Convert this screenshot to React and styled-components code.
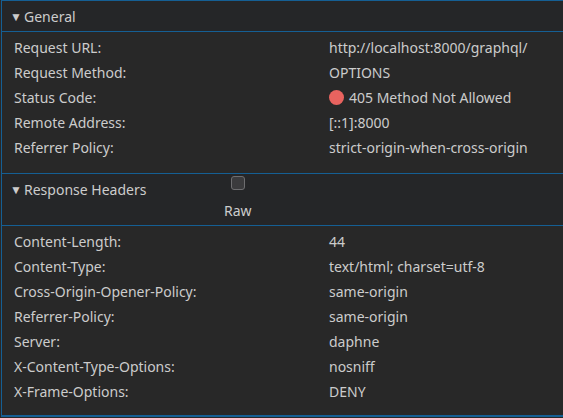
import styled, { createGlobalStyle } from "styled-components";

const GlobalStyle = createGlobalStyle`
  html, body {
    margin: 0;
    padding: 0;
    background: #282828;
  }
  body {
    font-family: "Noto Sans", "Open Sans", sans-serif;
    font-size: 14px;
    color: #cccccc;
  }
`;

const general = [
  { name: "Request URL:", value: "http://localhost:8000/graphql/" },
  { name: "Request Method:", value: "OPTIONS" },
  { name: "Status Code:", value: "405 Method Not Allowed", status: true },
  { name: "Remote Address:", value: "[::1]:8000" },
  { name: "Referrer Policy:", value: "strict-origin-when-cross-origin" },
];

const response = [
  { name: "Content-Length:", value: "44" },
  { name: "Content-Type:", value: "text/html; charset=utf-8" },
  { name: "Cross-Origin-Opener-Policy:", value: "same-origin" },
  { name: "Referrer-Policy:", value: "same-origin" },
  { name: "Server:", value: "daphne" },
  { name: "X-Content-Type-Options:", value: "nosniff" },
  { name: "X-Frame-Options:", value: "DENY" },
];

const App = () => {
  return (
    <>
      <GlobalStyle />
      <Panel>
        <SectionHeader>
          <Title>
            <Caret>▼</Caret>General
          </Title>
        </SectionHeader>
        <Rows>
          {general.map(row => (
            <Row key={row.name}>
              <Name>{row.name}</Name>
              <Value>
                {row.status && <StatusDot />}
                {row.value}
              </Value>
            </Row>
          ))}
        </Rows>
        <SectionHeader $tall>
          <Title>
            <Caret>▼</Caret>Response Headers
          </Title>
          <RawToggle>
            <input type="checkbox" />
            <span>Raw</span>
          </RawToggle>
        </SectionHeader>
        <Rows>
          {response.map(row => (
            <Row key={row.name}>
              <Name>{row.name}</Name>
              <Value>{row.value}</Value>
            </Row>
          ))}
        </Rows>
      </Panel>
    </>
  );
};
export default App;

const Panel = styled.div`
  width: 563px;
  height: 417px;
  box-sizing: border-box;
  border-top: 1px solid #155f94;
  border-left: 1px solid #155f94;
  border-bottom: 2px solid #155f94;
  margin-left: 1px;
  background: #282828;
  overflow: hidden;
`;

const SectionHeader = styled.div`
  display: flex;
  align-items: ${p => (p.$tall ? "flex-start" : "center")};
  height: ${p => (p.$tall ? "53px" : "31px")};
  box-sizing: border-box;
  padding-left: 8px;
  background: #252628;
  border-bottom: 1px solid #155f94;
  border-top: ${p => (p.$tall ? "1px solid #155f94" : "none")};
`;

const Title = styled.div`
  display: flex;
  align-items: center;
  height: 31px;
  width: 214px;
  flex-shrink: 0;
  color: #cccccc;
  line-height: 31px;
`;

const Caret = styled.span`
  font-size: 12px;
  width: 14px;
  display: inline-block;
  color: #cccccc;
`;

const RawToggle = styled.label`
  display: flex;
  flex-direction: column;
  align-items: center;
  gap: 11px;
  padding-top: 2px;
  cursor: pointer;

  input {
    appearance: none;
    margin: 0;
    width: 14px;
    height: 14px;
    border-radius: 3px;
    background: #3b3b3d;
    border: 1px solid #6e6e70;
    box-sizing: border-box;
  }
  span {
    line-height: 20px;
  }
`;

const Rows = styled.div`
  display: flex;
  flex-direction: column;
  padding: 3px 0 13px 0;
`;

const Row = styled.div`
  display: grid;
  grid-template-columns: 315px 1fr;
  height: 25px;
  align-items: center;
  padding-left: 12px;
`;

const Name = styled.div`
  color: #cccccc;
  white-space: nowrap;
`;

const Value = styled.div`
  display: flex;
  align-items: center;
  gap: 5px;
  color: #cccccc;
  white-space: nowrap;
`;

const StatusDot = styled.span`
  width: 15px;
  height: 15px;
  border-radius: 50%;
  background: #e8635f;
  flex-shrink: 0;
`;
